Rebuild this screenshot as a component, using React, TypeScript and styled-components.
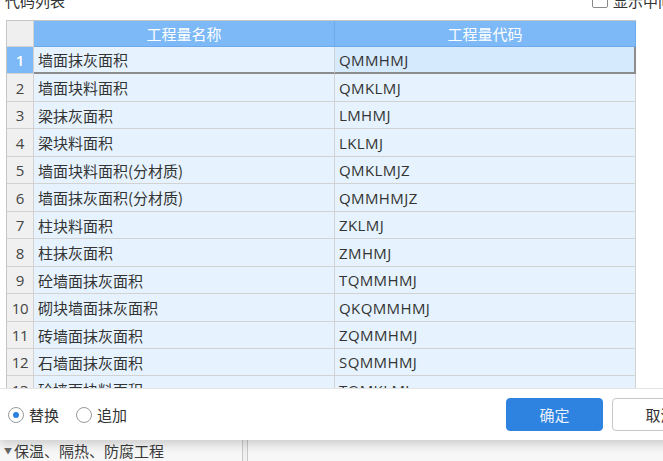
import React from 'react';
import styled, { createGlobalStyle } from 'styled-components';

const GlobalStyle = createGlobalStyle`
  html, body {
    margin: 0;
    padding: 0;
    background: #f4f4f4;
    overflow: hidden;
  }
  body {
    font-family: "Noto Sans CJK SC", "Noto Sans", sans-serif;
    color: #333;
  }
`;

const Page = styled.div`
  width: 663px;
  height: 461px;
  overflow: hidden;
  display: flex;
  flex-direction: column;
`;

const Dialog = styled.div`
  width: 720px;
  flex-shrink: 0;
  margin-top: -12px;
  background: #fff;
  display: flex;
  flex-direction: column;
  box-shadow: 0 4px 10px rgba(0, 0, 0, 0.18);
  position: relative;
  z-index: 1;
`;

const TitleRow = styled.div`
  height: 32px;
  display: flex;
  align-items: center;
  padding-left: 5px;
  font-size: 15px;
  color: #333;
`;

const TitleText = styled.span`
  margin-top: -8px;
  width: 587px;
`;

const ShowMiddle = styled.label`
  display: flex;
  align-items: center;
  gap: 5px;
  margin-top: -8px;
  font-size: 15px;
  white-space: nowrap;
`;

const CheckBox = styled.span`
  width: 14px;
  height: 14px;
  flex-shrink: 0;
  border: 1px solid #8a8a8a;
  border-radius: 2px;
  background: #fff;
`;

const TableArea = styled.div`
  height: 368px;
  overflow: hidden;
  padding-left: 6px;
`;

const Table = styled.div`
  width: 630px;
  border-top: 1px solid #c6c6c6;
  border-left: 1px solid #c6c6c6;
  box-sizing: border-box;
`;

const Row = styled.div<{ $h: number }>`
  display: grid;
  grid-template-columns: 27px 301px 301px;
  height: ${(p) => p.$h}px;
`;

const HeadCell = styled.div<{ $corner?: boolean }>`
  background: ${(p) => (p.$corner ? '#efefef' : '#7db9f6')};
  border-right: 1px solid ${(p) => (p.$corner ? '#d2d2d2' : '#6eaaeb')};
  border-bottom: 1px solid ${(p) => (p.$corner ? '#d2d2d2' : '#6eaaeb')};
  color: #fff;
  font-size: 15px;
  display: flex;
  align-items: center;
  justify-content: center;
`;

const NumCell = styled.div<{ $active?: boolean }>`
  background: ${(p) => (p.$active ? '#7db9f6' : '#f0f0f0')};
  color: ${(p) => (p.$active ? '#fff' : '#444')};
  font-family: "Open Sans", "Noto Sans", sans-serif;
  font-weight: ${(p) => (p.$active ? 600 : 400)};
  font-size: 15px;
  letter-spacing: ${(p) => (p.$active ? 0 : -0.3)}px;
  border-right: 1px solid #d2d2d2;
  border-bottom: 1px solid #d2d2d2;
  display: flex;
  align-items: center;
  justify-content: center;
`;

const DataCell = styled.div<{ $active?: boolean; $current?: boolean; $last?: boolean; $latin?: boolean }>`
  background: ${(p) => (p.$current ? '#d6eafe' : '#e6f3fe')};
  border-right: ${(p) => (p.$active && p.$last ? '2px solid #8c8c8c' : '1px solid #d2d2d2')};
  border-bottom: ${(p) => (p.$active ? '2px solid #8c8c8c' : '1px solid #d2d2d2')};
  font-family: ${(p) =>
    p.$latin
      ? '"Open Sans", "Noto Sans", sans-serif'
      : '"Noto Sans CJK SC", "Noto Sans", sans-serif'};
  font-size: 15px;
  letter-spacing: ${(p) => (p.$latin ? 0.4 : 0)}px;
  color: #333;
  padding-left: 4px;
  display: flex;
  align-items: center;
  white-space: nowrap;
  overflow: hidden;
`;

const Footer = styled.div`
  height: 52px;
  border-top: 1px solid #e4e4e4;
  display: flex;
  align-items: center;
  padding-left: 8px;
  box-sizing: border-box;
  white-space: nowrap;
`;

const RadioGroup = styled.div`
  display: flex;
  align-items: center;
  gap: 17px;
  width: 120px;
  flex-shrink: 0;
  font-size: 15px;
  line-height: 20px;
  color: #333;
`;

const RadioLabel = styled.label`
  display: flex;
  align-items: center;
  gap: 5px;
`;

const RadioDot = styled.span<{ $checked?: boolean }>`
  width: 14px;
  height: 14px;
  flex-shrink: 0;
  border-radius: 50%;
  border: 1px solid #9a9a9a;
  background: #fff;
  display: flex;
  align-items: center;
  justify-content: center;
  &::after {
    content: '';
    width: 6px;
    height: 6px;
    border-radius: 50%;
    background: ${(p) => (p.$checked ? '#2d80dd' : 'transparent')};
  }
`;

const Buttons = styled.div`
  margin-left: 378px;
  display: flex;
  gap: 9px;
  flex-shrink: 0;
`;

const Button = styled.button<{ $primary?: boolean }>`
  width: 97px;
  height: 33px;
  flex-shrink: 0;
  border-radius: 4px;
  font-family: "Noto Sans CJK SC", sans-serif;
  font-size: 15px;
  cursor: pointer;
  background: ${(p) => (p.$primary ? '#2e82e0' : '#fff')};
  color: ${(p) => (p.$primary ? '#e9f1fb' : '#333')};
  border: 1px solid ${(p) => (p.$primary ? '#2e82e0' : '#c8c8c8')};
`;

const Backdrop = styled.div`
  flex: 1;
  display: flex;
  background: #f7f7f7;
`;

const TreePane = styled.div`
  width: 238px;
  border-right: 1px solid #c8c8c8;
  display: flex;
  align-items: center;
  padding-left: 4px;
  font-size: 15px;
  color: #3a3a3a;
  gap: 2px;
  white-space: nowrap;
`;

const Splitter = styled.div`
  width: 4px;
  border-right: 1px solid #c8c8c8;
  background: #f0f0f0;
`;

const Caret = styled.span`
  font-size: 8px;
  color: #666;
`;

const rows: [string, string][] = [
  ['墙面抹灰面积', 'QMMHMJ'],
  ['墙面块料面积', 'QMKLMJ'],
  ['梁抹灰面积', 'LMHMJ'],
  ['梁块料面积', 'LKLMJ'],
  ['墙面块料面积(分材质)', 'QMKLMJZ'],
  ['墙面抹灰面积(分材质)', 'QMMHMJZ'],
  ['柱块料面积', 'ZKLMJ'],
  ['柱抹灰面积', 'ZMHMJ'],
  ['砼墙面抹灰面积', 'TQMMHMJ'],
  ['砌块墙面抹灰面积', 'QKQMMHMJ'],
  ['砖墙面抹灰面积', 'ZQMMHMJ'],
  ['石墙面抹灰面积', 'SQMMHMJ'],
  ['砼墙面块料面积', 'TQMKLMJ'],
  ['砌块墙面块料面积', 'QKQMKLMJ'],
];

const ROW = 27.45;
const rowHeight = (i: number) => Math.round((i + 1) * ROW) - Math.round(i * ROW);

export default function App() {
  return (
    <Page>
      <GlobalStyle />
      <Dialog>
        <TitleRow>
          <TitleText>代码列表</TitleText>
          <ShowMiddle>
            <CheckBox />
            显示中间量
          </ShowMiddle>
        </TitleRow>
        <TableArea>
          <Table>
            <Row $h={26}>
              <HeadCell $corner />
              <HeadCell>工程量名称</HeadCell>
              <HeadCell>工程量代码</HeadCell>
            </Row>
            {rows.map(([name, code], i) => {
              const active = i === 0;
              return (
                <Row key={code} $h={rowHeight(i)}>
                  <NumCell $active={active}>{i + 1}</NumCell>
                  <DataCell $active={active}>{name}</DataCell>
                  <DataCell $active={active} $current={active} $last $latin>
                    {code}
                  </DataCell>
                </Row>
              );
            })}
          </Table>
        </TableArea>
        <Footer>
          <RadioGroup>
            <RadioLabel>
              <RadioDot $checked />
              <span>替换</span>
            </RadioLabel>
            <RadioLabel>
              <RadioDot />
              <span>追加</span>
            </RadioLabel>
          </RadioGroup>
          <Buttons>
            <Button $primary>确定</Button>
            <Button>取消</Button>
          </Buttons>
        </Footer>
      </Dialog>
      <Backdrop>
        <TreePane>
          <Caret>▼</Caret>
          保温、隔热、防腐工程
        </TreePane>
        <Splitter />
      </Backdrop>
    </Page>
  );
}
